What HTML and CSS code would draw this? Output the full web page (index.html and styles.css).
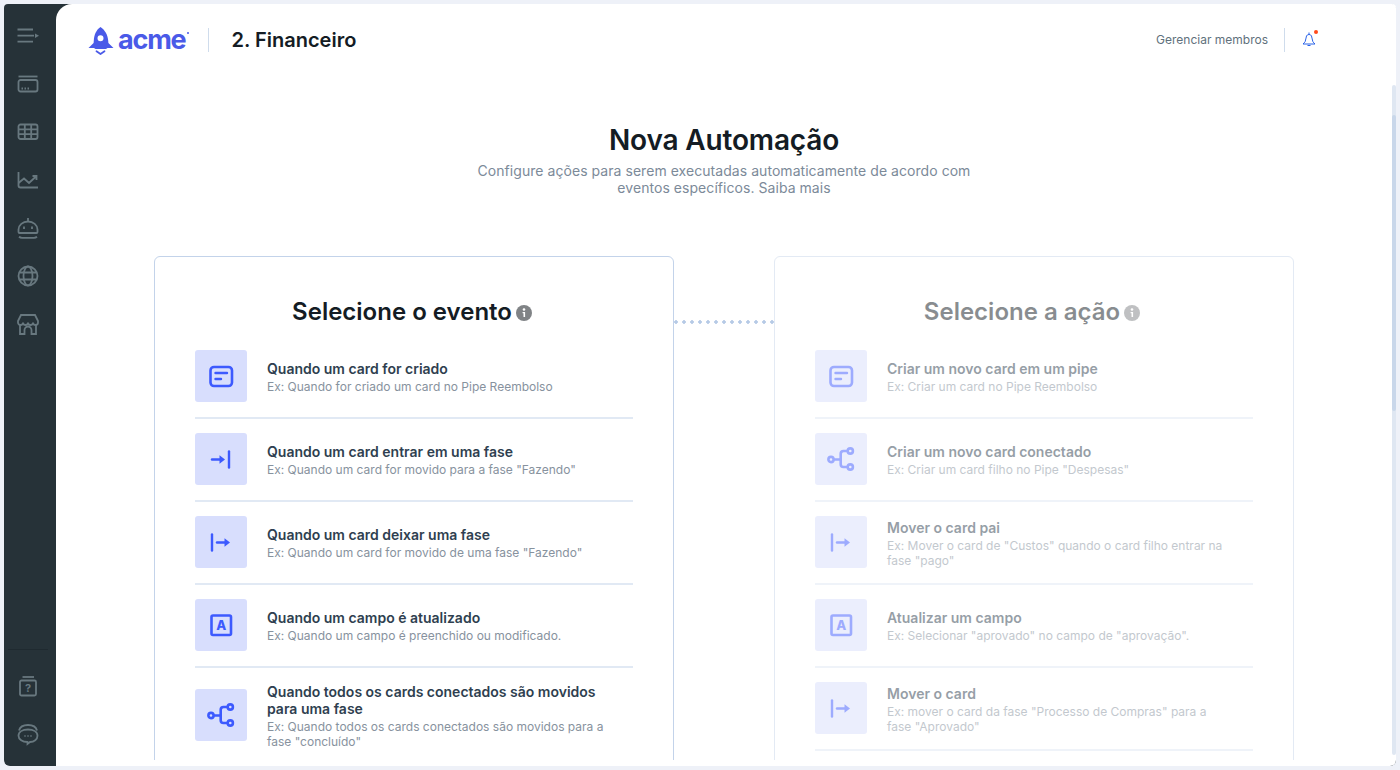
FILE: index.html
```html
<!DOCTYPE html>
<html lang="en">
<head>
    <meta charset="UTF-8">
    <meta name="viewport" content="width=device-width, initial-scale=1.0">
    <title>Nova Automação</title>
    <link rel="stylesheet" href="styles.css">
</head>
<body>

<svg class="sprite" xmlns="http://www.w3.org/2000/svg">
    <symbol id="i-card" viewBox="0 0 32 32">
        <rect x="5.500" y="7" width="21.500" height="19" rx="3.500" fill="none" stroke="currentColor" stroke-width="2.600"/>
        <path d="M10.500 13h11.500M10.500 19h5.500" fill="none" stroke="currentColor" stroke-width="2.400" stroke-linecap="round"/>
    </symbol>
    <symbol id="i-in" viewBox="0 0 32 32">
        <path d="M24 8.500v16" fill="none" stroke="currentColor" stroke-width="2.400" stroke-linecap="round"/>
        <path d="M7 16.500h10" fill="none" stroke="currentColor" stroke-width="2.400" stroke-linecap="round"/>
        <path d="M14.500 12.300 20 16.500l-5.500 4.200z" fill="currentColor"/>
    </symbol>
    <symbol id="i-out" viewBox="0 0 32 32">
        <path d="M7 8.500v16" fill="none" stroke="currentColor" stroke-width="2.400" stroke-linecap="round"/>
        <path d="M12 16.500h10" fill="none" stroke="currentColor" stroke-width="2.400" stroke-linecap="round"/>
        <path d="M19.500 12.300 25 16.500l-5.500 4.200z" fill="currentColor"/>
    </symbol>
    <symbol id="i-field" viewBox="0 0 32 32">
        <rect x="6.500" y="6.500" width="19.500" height="19.500" rx="1.500" fill="none" stroke="currentColor" stroke-width="2.600"/>
        <text x="16.200" y="21" text-anchor="middle" font-family="Inter" font-weight="800" font-size="13" fill="currentColor">A</text>
    </symbol>
    <symbol id="i-tree" viewBox="0 0 32 32">
        <circle cx="6" cy="16.500" r="2.600" fill="none" stroke="currentColor" stroke-width="2.600"/>
        <circle cx="25.300" cy="8" r="2.600" fill="none" stroke="currentColor" stroke-width="2.600"/>
        <circle cx="25.300" cy="24" r="2.600" fill="none" stroke="currentColor" stroke-width="2.600"/>
        <path d="M9 16.500h6.700M22.500 8h-4a2.800 2.800 0 0 0-2.800 2.800v10.400a2.800 2.800 0 0 0 2.800 2.800h4" fill="none" stroke="currentColor" stroke-width="2.600"/>
    </symbol>
    <symbol id="i-info" viewBox="0 0 16 16">
        <circle cx="8" cy="8" r="8" fill="currentColor"/>
        <circle cx="8" cy="4.500" r="1.300" fill="#fff"/>
        <path d="M6.600 7h2.500v5H7.500V8.300h-.9z" fill="#fff"/>
    </symbol>
</svg>

<div class="frame">
    <nav class="sidebar">
        <div class="nav-top">
            <svg class="nav-icon" viewBox="0 0 24 24"><path d="M1.500 5.500H17M1.500 11.700H18M1.500 17.700H17"/><path class="solid" d="M19 9.500l4 2.300-4 2.300z"/></svg>
            <svg class="nav-icon" viewBox="0 0 24 24"><path d="M2.500 4.500h19"/><rect x="2.500" y="8" width="19" height="11.500" rx="2"/><path d="M5.500 16.500h1.500M8.500 16.500h1.500M11.500 16.500h1.500"/></svg>
            <svg class="nav-icon" viewBox="0 0 24 24"><rect x="2.500" y="4.500" width="19" height="14.500" rx="2"/><path d="M2.500 9.300h19M2.500 14.200h19M8.800 4.500V19M15.200 4.500V19"/></svg>
            <svg class="nav-icon" viewBox="0 0 24 24"><path d="M2.500 4v13.500a2 2 0 0 0 2 2h17.500"/><path d="M2.500 15l5.500-4.500 5 4.500 7-6.500M16.500 8h4v4"/></svg>
            <svg class="nav-icon" viewBox="0 0 24 24"><path d="M12 2v3.500M2.500 16v-2.500a9.500 8 0 0 1 19 0V16a1 1 0 0 1-1 1h-17a1 1 0 0 1-1-1z"/><path d="M3 20.800c1 .8 2 1 3 1h12c1 0 2-.2 3-1"/><path d="M8 10.500v2.500M16 10.500v2.500"/></svg>
            <svg class="nav-icon" viewBox="0 0 24 24"><circle cx="12" cy="12" r="9.500"/><ellipse cx="12" cy="12" rx="4.500" ry="9.500"/><path d="M3.300 8.500h17.400M3.300 15.500h17.400"/></svg>
            <svg class="nav-icon" viewBox="0 0 24 24"><path d="M5 3h14l3 6v1.500a2.500 2.500 0 0 1-5 0 2.500 2.500 0 0 1-5 0 2.500 2.500 0 0 1-5 0 2.500 2.500 0 0 1-5 0V9z"/><path d="M4 13v9h4.500v-4a3.500 3.500 0 0 1 7 0v4H20v-9"/></svg>
        </div>
        <div class="nav-bottom">
            <svg class="nav-icon" viewBox="0 0 24 24"><path d="M6.500 3h11.500"/><rect x="4" y="6.500" width="16" height="15" rx="1.500"/><text x="12" y="18" text-anchor="middle" font-family="Inter" font-weight="700" font-size="11">?</text></svg>
            <svg class="nav-icon" viewBox="0 0 24 24"><path d="M3 8.500C4 4.500 8 3 12 3s8 1.500 9 5.500"/><path d="M12 7.500c5.500 0 9.500 2.400 9.500 6.300 0 3.600-3.500 6-7.500 6.200L11.500 22v-2c-5-.2-9-2.600-9-6.200 0-3.900 4-6.300 9.500-6.300z"/><path d="M8.500 14h1M11.500 14h1M14.500 14h1"/></svg>
        </div>
    </nav>

    <div class="main">
        <header class="topbar">
            <div class="topbar-left">
                <div class="logo">
                    <svg class="rocket" viewBox="0 0 26 28">
                        <path fill-rule="evenodd" d="M12.500 0c4.500 3 7.300 8 7.700 13.500l.2 2.500 5.100 5h-6l-1.500 1H7.500L6 21H.5l5.100-5 .2-2.500C6.200 8 8 3 12.500 0zm0 8.300a3 3 0 1 0 0 6 3 3 0 0 0 0-6z"/>
                        <path d="M8.500 24.300l4 2.700 4-2.700" fill="none" stroke="#4a5ae8" stroke-width="1.800" stroke-linecap="round"/>
                    </svg>
                    <span class="logo-text">acme</span><span class="logo-dot"></span>
                </div>
                <h2 class="pipe-name">2. Financeiro</h2>
            </div>
            <div class="topbar-right">
                <a class="members">Gerenciar membros</a>
                <div class="bell">
                    <svg viewBox="0 0 16 16"><path d="M8 .5v1.500M5.500 4a2.800 2.800 0 0 1 5 0c.7 2 .7 4 1.300 5.500.5 1 1.500 1.800 2.200 2.500H2c.7-.7 1.700-1.500 2.200-2.500C4.800 8 4.800 6 5.500 4zM6.500 13.500h3"/></svg>
                    <span class="bell-dot"></span>
                </div>
            </div>
        </header>

        <div class="content">
            <div class="intro">
                <h1>Nova Automação</h1>
                <p>Configure ações para serem executadas automaticamente de acordo com eventos específicos. Saiba mais</p>
            </div>

            <div class="columns">
                <section class="panel">
                    <h3 class="panel-title">Selecione o evento<svg class="info"><use href="#i-info"/></svg></h3>
                    <ul class="options">
                        <li class="option">
                            <div class="tile"><svg><use href="#i-card"/></svg></div>
                            <div class="option-text"><strong>Quando um card for criado</strong><span>Ex: Quando for criado um card no Pipe Reembolso</span></div>
                        </li>
                        <li class="option">
                            <div class="tile"><svg><use href="#i-in"/></svg></div>
                            <div class="option-text"><strong>Quando um card entrar em uma fase</strong><span>Ex: Quando um card for movido para a fase "Fazendo"</span></div>
                        </li>
                        <li class="option">
                            <div class="tile"><svg><use href="#i-out"/></svg></div>
                            <div class="option-text"><strong>Quando um card deixar uma fase</strong><span>Ex: Quando um card for movido de uma fase "Fazendo"</span></div>
                        </li>
                        <li class="option">
                            <div class="tile"><svg><use href="#i-field"/></svg></div>
                            <div class="option-text"><strong>Quando um campo é atualizado</strong><span>Ex: Quando um campo é preenchido ou modificado.</span></div>
                        </li>
                        <li class="option">
                            <div class="tile"><svg><use href="#i-tree"/></svg></div>
                            <div class="option-text"><strong>Quando todos os cards conectados são movidos para uma fase</strong><span>Ex: Quando todos os cards conectados são movidos para a fase "concluído"</span></div>
                        </li>
                    </ul>
                </section>

                <div class="connector"></div>

                <section class="panel panel-off">
                    <h3 class="panel-title">Selecione a ação<svg class="info"><use href="#i-info"/></svg></h3>
                    <ul class="options">
                        <li class="option">
                            <div class="tile"><svg><use href="#i-card"/></svg></div>
                            <div class="option-text"><strong>Criar um novo card em um pipe</strong><span>Ex: Criar um card no Pipe Reembolso</span></div>
                        </li>
                        <li class="option">
                            <div class="tile"><svg><use href="#i-tree"/></svg></div>
                            <div class="option-text"><strong>Criar um novo card conectado</strong><span>Ex: Criar um card filho no Pipe "Despesas"</span></div>
                        </li>
                        <li class="option">
                            <div class="tile"><svg><use href="#i-out"/></svg></div>
                            <div class="option-text"><strong>Mover o card pai</strong><span>Ex: Mover o card de "Custos" quando o card filho entrar na fase "pago"</span></div>
                        </li>
                        <li class="option">
                            <div class="tile"><svg><use href="#i-field"/></svg></div>
                            <div class="option-text"><strong>Atualizar um campo</strong><span>Ex: Selecionar "aprovado" no campo de "aprovação".</span></div>
                        </li>
                        <li class="option">
                            <div class="tile"><svg><use href="#i-out"/></svg></div>
                            <div class="option-text"><strong>Mover o card</strong><span>Ex: mover o card da fase "Processo de Compras" para a fase "Aprovado"</span></div>
                        </li>
                    </ul>
                </section>
            </div>
        </div>

        <div class="scrollbar"><div class="scrollbar-thumb"></div></div>
    </div>
</div>

</body>
</html>
```

FILE: styles.css
```css
* {
    box-sizing: border-box;
}
html, body {
    height: 100%;
    margin: 0;
    overflow: hidden;
}
body {
    font-family: 'Inter', 'Liberation Sans', sans-serif;
    background-color: #eef1f8;
    padding: 4px;
    color: #141c24;
}
.sprite {
    display: none;
}
.frame {
    display: flex;
    height: 100%;
    background-color: #263238;
    border-radius: 4px 6px 6px 6px;
}

/* sidebar */
.sidebar {
    width: 52px;
    flex-shrink: 0;
    display: flex;
    flex-direction: column;
    justify-content: space-between;
    align-items: center;
    padding: 20px 4px 20px 0;
}
.nav-top, .nav-bottom {
    display: flex;
    flex-direction: column;
    align-items: center;
    gap: 24px;
}
.nav-bottom {
    width: 40px;
    padding-top: 24px;
    border-top: 1px solid #1f2a30;
}
.nav-icon {
    width: 24px;
    height: 24px;
    fill: none;
    stroke: #68787f;
    stroke-width: 1.8;
}
.nav-icon .solid {
    fill: #68787f;
    stroke: none;
}
.nav-icon text {
    fill: #68787f;
    stroke: none;
}

/* main area */
.main {
    flex: 1;
    position: relative;
    display: flex;
    flex-direction: column;
    min-width: 0;
    background-color: #fff;
    border-radius: 16px 4px 6px 0;
    padding-bottom: 6px;
}
.topbar {
    height: 72px;
    flex-shrink: 0;
    display: flex;
    justify-content: space-between;
    align-items: center;
    padding: 0 79px 0 32px;
}
.topbar-left, .topbar-right {
    display: flex;
    align-items: center;
}
.logo {
    display: flex;
    align-items: center;
    height: 24px;
    padding-right: 19px;
    border-right: 1px solid #cfdcec;
    position: relative;
}
.rocket {
    width: 26px;
    height: 28px;
    fill: #4a5ae8;
    margin-top: 2px;
}
.logo-text {
    font-size: 27px;
    font-weight: 700;
    color: #4a5ae8;
    margin-left: 4px;
    line-height: 24px;
    letter-spacing: -1.2px;
}
.logo-dot {
    width: 2px;
    height: 2px;
    background-color: #4a5ae8;
    border-radius: 50%;
    margin: -14px 0 0 1px;
}
.pipe-name {
    margin: 0 0 0 23px;
    font-size: 20px;
    font-weight: 600;
    line-height: 24px;
    color: #141c24;
}
.members {
    height: 24px;
    line-height: 24px;
    padding-right: 16px;
    border-right: 1px solid #cfdcec;
    font-size: 12px;
    color: #5f717c;
}
.bell {
    position: relative;
    width: 16px;
    height: 16px;
    margin-left: 16px;
}
.bell svg {
    display: block;
    width: 16px;
    height: 16px;
    fill: none;
    stroke: #2962e8;
    stroke-width: 1;
}
.bell-dot {
    position: absolute;
    top: -2px;
    right: -1px;
    width: 4px;
    height: 4px;
    border-radius: 50%;
    background-color: #ff4a1c;
}

/* scrolling content */
.content {
    flex: 1;
    min-height: 0;
    overflow: hidden;
    padding-right: 4px;
}
.intro {
    text-align: center;
    padding-top: 47px;
}
.intro h1 {
    margin: 0;
    font-size: 28px;
    font-weight: 600;
    line-height: 34px;
    letter-spacing: -0.15px;
    color: #141c24;
}
.intro p {
    width: 520px;
    margin: 5px auto 0;
    font-size: 14px;
    line-height: 17px;
    letter-spacing: 0.05px;
    color: #7c8a99;
}
.columns {
    display: flex;
    justify-content: center;
    align-items: stretch;
    margin-top: 60px;
}
.panel {
    width: 520px;
    flex-shrink: 0;
    padding: 40px 40px 0;
    border: 1px solid #c3d3ea;
    border-radius: 6px;
}
.panel-off {
    border-color: #e3eaf4;
}
.panel-off .panel-title,
.panel-off .options {
    opacity: 0.5;
}
.panel-title {
    display: flex;
    justify-content: center;
    align-items: center;
    gap: 4px;
    margin: 0 0 10px;
    padding-right: 4px;
    font-size: 24px;
    font-weight: 600;
    line-height: 29px;
    color: #141c24;
}
.info {
    width: 16px;
    height: 16px;
    margin-top: 3px;
    color: #808386;
}
.connector {
    align-self: flex-start;
    width: 100px;
    height: 4px;
    margin-top: 64px;
    flex-shrink: 0;
    background-image: radial-gradient(circle at 2px 2px, #b6cae6 1.5px, transparent 2px);
    background-size: 8px 4px;
    background-repeat: repeat-x;
}
.options {
    list-style: none;
    margin: 0;
    padding: 0;
}
.option {
    display: flex;
    align-items: center;
    gap: 20px;
    padding: 14px 0 15px;
    border-bottom: 2px solid #e1e9f4;
}
.tile {
    width: 52px;
    height: 52px;
    flex-shrink: 0;
    display: flex;
    align-items: center;
    justify-content: center;
    border-radius: 3px;
    background-color: #d8defd;
    color: #3d5afe;
}
.tile svg {
    width: 32px;
    height: 32px;
}
.option-text {
    display: flex;
    flex-direction: column;
    gap: 2px;
    max-width: 342px;
    margin: 1px 0 -1px;
}
.option-text strong {
    font-size: 14px;
    font-weight: 600;
    line-height: 17px;
    color: #2f3f50;
}
.option-text span {
    font-size: 12px;
    line-height: 15px;
    color: #87929e;
}

.scrollbar {
    position: absolute;
    top: 81px;
    right: 0;
    width: 4px;
    height: 670px;
    padding-top: 30px;
    border-radius: 4px;
    background-color: #dfe7f2;
}
.scrollbar-thumb {
    height: 296px;
    border-radius: 4px;
    background-color: #c9d7ea;
}
```
